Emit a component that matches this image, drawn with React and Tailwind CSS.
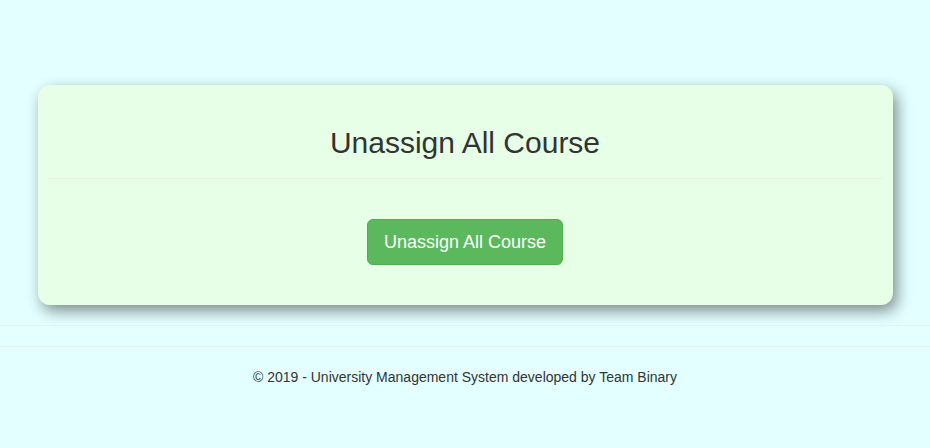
export default function App() {
  return (
    <div className="min-h-[448px] bg-[#e3ffff] pt-[85px] text-[#333] font-['Liberation_Sans',Arial,sans-serif]">
      <div className="mx-auto w-[855px] rounded-[12px] bg-[#e6ffe6] px-[10px] pt-[41px] pb-[40px] shadow-[4px_6px_15px_rgba(0,0,0,0.45)]">
        <h2 className="text-center text-[30px] leading-[33px]">Unassign All Course</h2>
        <div className="mt-[19px] border-t border-[#eaeeea]" />
        <div className="mt-[40px] flex justify-center">
          <button
            type="button"
            className="h-[46px] rounded-[6px] border border-[#4cae4c] bg-[#5cb85c] px-[16px] text-[18px] text-white"
          >
            Unassign All Course
          </button>
        </div>
      </div>
      <div className="mt-[20px] border-t border-[#e6f2f2]" />
      <div className="mt-[20px] border-t border-[#e6f2f2]" />
      <p className="mt-[20px] text-center text-[14px] leading-[20px]">
        © 2019 - University Management System developed by Team Binary
      </p>
    </div>
  );
}
